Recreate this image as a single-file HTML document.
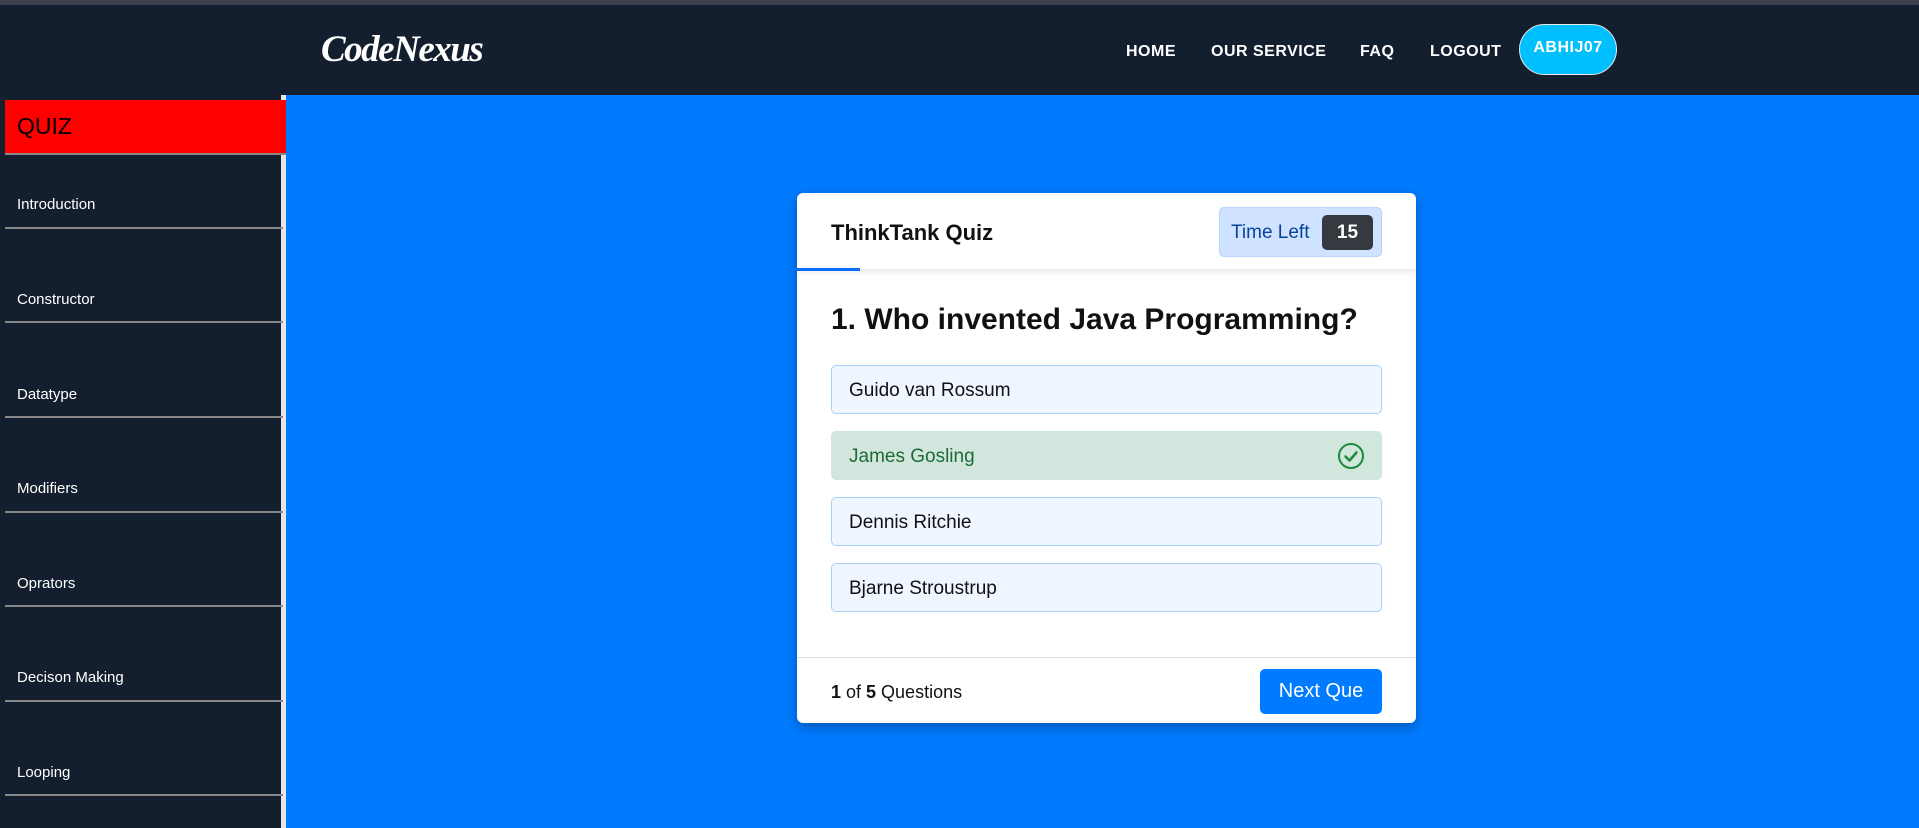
<!DOCTYPE html>
<html><head><meta charset="utf-8"><style>
*{box-sizing:border-box;margin:0;padding:0}
body{width:1919px;height:828px;overflow:hidden;background:#007bff;font-family:"Liberation Sans",sans-serif;position:relative}
.top{position:absolute;left:0;top:0;width:1919px;height:5px;background:#3b414c}
.hdr{position:absolute;left:0;top:5px;width:1919px;height:90px;background:#131f2e}
.logo{position:absolute;left:321px;top:28px;color:#fff;font:italic bold 37px "Liberation Serif",serif;letter-spacing:-1.5px}
.nav{position:absolute;top:43px;color:#fff;font-weight:bold;font-size:16px;letter-spacing:.5px}
.pill{position:absolute;left:1519px;top:24px;width:98px;height:51px;border-radius:26px;background:#00bfff;border:1px solid #e8e8e8;color:#fff;font-weight:bold;font-size:16px;text-align:center;line-height:46px;letter-spacing:.5px}
.side{position:absolute;left:0;top:95px;width:281px;height:733px;background:#131f2e}
.sbar{position:absolute;left:281px;top:95px;width:5px;height:733px;background:#e6e6e6}
.quiz{position:absolute;left:5px;top:100px;width:281px;height:55px;background:#ff0000;border-bottom:2px solid #888;color:#000;font-size:23px;padding:13px 0 0 12px}
.it{position:absolute;left:5px;width:278px;border-bottom:2px solid #888;color:#fff;font-size:15px;padding-left:12px;padding-top:3px}
.card{position:absolute;left:797px;top:193px;width:619px;height:530px;background:#fff;border-radius:6px;box-shadow:0 4px 12px rgba(0,0,0,.3);overflow:hidden}
.ch{position:absolute;left:0;top:0;width:619px;height:77px;box-shadow:0 3px 6px rgba(0,0,0,.08);border-bottom:1px solid #eee}
.title{position:absolute;left:34px;top:27px;font-weight:bold;font-size:22px;color:#111}
.ul{position:absolute;left:0;top:75px;width:63px;height:3px;background:#0d6efd}
.tl{position:absolute;left:422px;top:14px;width:163px;height:50px;background:#cfe2ff;border:1px solid #b6d4fe;border-radius:5px;color:#084298;font-size:19px;padding:14px 0 0 11px}
.bd{position:absolute;left:102px;top:7px;width:51px;height:35px;background:#343a40;border-radius:5px;color:#fff;font-weight:bold;text-align:center;line-height:35px;font-size:19px}
.q{position:absolute;left:34px;top:110px;font-weight:bold;font-size:30px;color:#111}
.op{position:absolute;left:34px;width:551px;height:49px;background:#eff6ff;border:1.5px solid #a8d0f8;border-radius:5px;font-size:19px;color:#111;padding:14px 0 0 17px}
.ok{background:#d1e7dd;border-color:#d1e7dd;color:#1e6b35}
.ft{position:absolute;left:0;top:464px;width:619px;border-top:1px solid #ddd}
.cnt{position:absolute;left:34px;top:489px;font-size:18px;color:#111}
.btn{position:absolute;left:463px;top:476px;width:122px;height:45px;background:#007bff;border-radius:5px;color:#fff;font-size:20px;text-align:center;line-height:45px}
</style></head><body>
<div class="top"></div>
<div class="hdr"></div>
<div class="logo">CodeNexus</div>
<div class="nav" style="left:1126px">HOME</div>
<div class="nav" style="left:1211px">OUR SERVICE</div>
<div class="nav" style="left:1360px">FAQ</div>
<div class="nav" style="left:1430px">LOGOUT</div>
<div class="pill">ABHIJ07</div>
<div class="side"></div>
<div class="sbar"></div>
<div class="quiz">QUIZ</div>
<div class="it" style="top:193px;height:36px">Introduction</div>
<div class="it" style="top:288px;height:35px">Constructor</div>
<div class="it" style="top:383px;height:35px">Datatype</div>
<div class="it" style="top:477px;height:36px">Modifiers</div>
<div class="it" style="top:572px;height:35px">Oprators</div>
<div class="it" style="top:666px;height:36px">Decison Making</div>
<div class="it" style="top:761px;height:35px">Looping</div>
<div class="card">
 <div class="ch"><div class="title">ThinkTank Quiz</div><div class="ul"></div>
  <div class="tl">Time Left<div class="bd">15</div></div></div>
 <div class="q">1. Who invented Java Programming?</div>
 <div class="op" style="top:172px">Guido van Rossum</div>
 <div class="op ok" style="top:238px">James Gosling
  <svg style="position:absolute;right:16px;top:10px" width="28" height="28" viewBox="0 0 28 28"><circle cx="14" cy="14" r="12" fill="none" stroke="#1e8a3a" stroke-width="2"/><path d="M8.5 14.5l4 4 7-8" fill="none" stroke="#1e8a3a" stroke-width="2.5" stroke-linecap="round" stroke-linejoin="round"/></svg></div>
 <div class="op" style="top:304px">Dennis Ritchie</div>
 <div class="op" style="top:370px">Bjarne Stroustrup</div>
 <div class="ft"></div>
 <div class="cnt"><b>1</b> of <b>5</b> Questions</div>
 <div class="btn">Next Que</div>
</div>
</body></html>
